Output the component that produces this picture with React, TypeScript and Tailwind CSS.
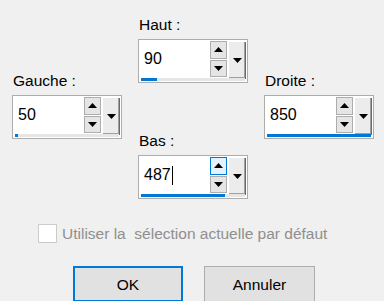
import React from 'react';

const Up = () => (
  <svg width="9" height="5" viewBox="0 0 9 5"><polygon points="0,5 4.5,0 9,5" fill="#000" /></svg>
);
const Down = () => (
  <svg width="9" height="5" viewBox="0 0 9 5"><polygon points="0,0 9,0 4.5,5" fill="#000" /></svg>
);

function SpinField({ label, value, pct, hot, caret }: { label: string; value: string; pct: number; hot?: boolean; caret?: boolean }) {
  return (
    <div className="flex flex-col w-[110px]">
      <div className="h-[20px] leading-[20px] pl-[1px] text-black">{label}</div>
      <div className="mt-[4px] h-[44px] border border-[#adadad] bg-white p-px flex flex-col">
        <div className="flex h-[36px]">
          <div className="flex-1 flex items-center pl-[4px] text-black text-[16px]">
            {value}
            {caret && <span className="ml-px w-px h-[19px] bg-black" />}
          </div>
          <div className="w-[17px] flex flex-col gap-px">
            <div className={`flex-1 flex items-center justify-center border ${hot ? 'border-[#0078d7] bg-[#e5f1fb]' : 'border-[#adadad] bg-[#e5e5e5]'}`}>
              <Up />
            </div>
            <div className="flex-1 flex items-center justify-center border border-[#adadad] bg-[#e5e5e5]">
              <Down />
            </div>
          </div>
          <div className="ml-px w-[18px] h-[38px] flex items-center justify-center bg-[#ececec] shadow-[inset_1px_1px_0_#ffffff,inset_-1px_-1px_0_#696969,inset_-2px_-2px_0_#a0a0a0]">
            <Down />
          </div>
        </div>
        <div className="mt-px mx-px h-[3px] bg-[#e6e6e6]">
          <div className="h-full bg-[#0078d7]" style={{ width: `${pct}%` }} />
        </div>
      </div>
    </div>
  );
}

export default function App() {
  return (
    <div className="w-[384px] h-[301px] bg-[#f0f0f0] overflow-hidden font-['Liberation_Sans',Arial,sans-serif] text-[15.5px]">
      <div className="flex items-start pl-[12px] gap-[16px]">
        <div className="pt-[71px]">
          <SpinField label="Gauche :" value="50" pct={3} />
        </div>
        <div className="pt-[15px] flex flex-col gap-[48px]">
          <SpinField label="Haut :" value="90" pct={15} />
          <SpinField label="Bas :" value="487" pct={81} hot caret />
        </div>
        <div className="pt-[71px]">
          <SpinField label="Droite :" value="850" pct={100} />
        </div>
      </div>
      <div className="mt-[23px] pl-[38px] flex items-center gap-[5px]">
        <div className="w-[19px] h-[19px] border border-[#cccccc] bg-white" />
        <span className="text-[#8f8f8f] whitespace-pre">Utiliser la  sélection actuelle par défaut</span>
      </div>
      <div className="mt-[21px] pl-[73px] flex gap-[21px]">
        <button className="w-[110px] h-[36px] border-2 border-[#0078d7] bg-[#e1e1e1] text-black">OK</button>
        <button className="w-[111px] h-[36px] border border-[#adadad] bg-[#e1e1e1] text-black">Annuler</button>
      </div>
    </div>
  );
}
